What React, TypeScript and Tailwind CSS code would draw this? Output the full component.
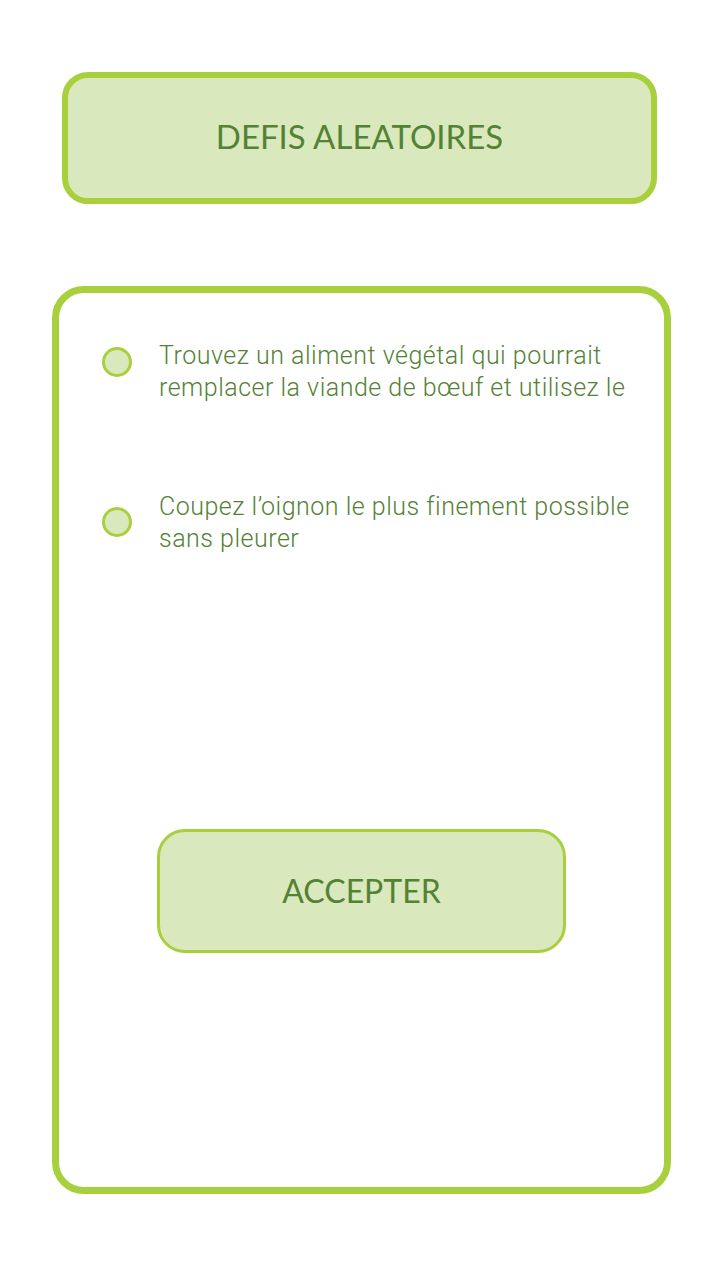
import React from 'react';

// Défis proposés à l'utilisateur (décalage de la pastille propre à chaque ligne)
const defis: { texte: string; pastille: string }[] = [
  {
    texte: 'Trouvez un aliment végétal qui pourrait remplacer la viande de bœuf et utilisez le',
    pastille: 'mt-[7px]',
  },
  {
    texte: 'Coupez l’oignon le plus finement possible sans pleurer',
    pastille: 'mt-[16px]',
  },
];

const App: React.FC = () => {
  return (
    <div className="min-h-[1281px] w-[721px] bg-white pt-[72px]">
      {/* Titre */}
      <div className="ml-[62px] flex h-[132px] w-[595px] items-center justify-center rounded-[26px] border-[6px] border-[#a8cf3c] bg-[#d9e9bd]">
        <h1 className="pb-[2px] font-['Lato','Open_Sans',sans-serif] text-[33px] text-[#548235]">
          DEFIS ALEATOIRES
        </h1>
      </div>

      {/* Carte des défis */}
      <div className="ml-[52px] mt-[82px] flex h-[908px] w-[619px] flex-col rounded-[32px] border-[7px] border-[#a8cf3c] bg-white pt-[47px]">
        <ul className="flex flex-col gap-[87px]">
          {defis.map((defi) => (
            <li key={defi.texte} className="flex items-start">
              <span className={`ml-[43px] h-[30px] w-[30px] shrink-0 rounded-full border-[3px] border-[#a8cf3c] bg-[#d9e9bd] ${defi.pastille}`}></span>
              <p className="ml-[27px] w-[485px] font-['Roboto','Liberation_Sans',sans-serif] text-[25px] font-light leading-[32px] tracking-[0.5px] text-[#548235]">
                {defi.texte}
              </p>
            </li>
          ))}
        </ul>

        <button className="mx-auto mt-[274px] flex h-[124px] w-[409px] items-center justify-center rounded-[28px] border-[3px] border-[#a8cf3c] bg-[#d9e9bd]">
          <span className="font-['Lato','Open_Sans',sans-serif] text-[32px] text-[#548235]">ACCEPTER</span>
        </button>
      </div>
    </div>
  );
};

export default App;
